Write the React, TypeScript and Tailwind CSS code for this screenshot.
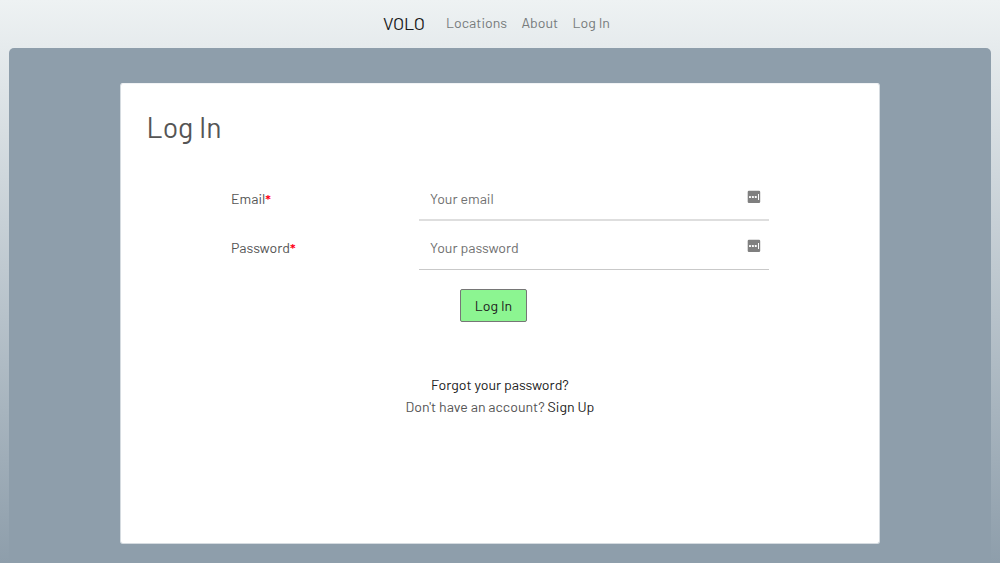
import type { ReactNode } from 'react';

function AutofillIcon({ place }: { place: string }) {
  return (
    <svg className={`absolute right-2 size-[14px] ${place}`} viewBox="0 0 14 14" aria-hidden="true">
      <rect x="0.7" y="0.8" width="12.5" height="12.2" rx="1.2" fill="#7f7f7f" />
      <g fill="#fff">
        <rect x="2" y="6" width="2" height="2" rx="0.4" />
        <rect x="4.9" y="6" width="2" height="2" rx="0.4" />
        <rect x="7.8" y="6" width="2" height="2" rx="0.4" />
        <rect x="11" y="4" width="1" height="6" />
      </g>
    </svg>
  );
}

interface FieldProps {
  label: ReactNode;
  type: string;
  placeholder: string;
  box: string;
  iconPlace: string;
}

function Field({ label, type, placeholder, box, iconPlace }: FieldProps) {
  return (
    <div className="flex items-start">
      <label className="w-[188px] pt-[12px] leading-5">{label}</label>
      <div className="relative w-[350px]">
        <input
          type={type}
          placeholder={placeholder}
          className={`block h-11 w-full bg-transparent px-[11px] text-[#555] outline-none placeholder:text-[#707070] ${box}`}
        />
        <AutofillIcon place={iconPlace} />
      </div>
    </div>
  );
}

function Required() {
  return <span className="font-semibold text-[#ff0018]">*</span>;
}

export default function App() {
  return (
    <div className="flex h-[563px] flex-col overflow-hidden bg-linear-to-b from-[#eef2f3] to-[#8e9eab] font-['Barlow','Roboto',sans-serif] text-[14.15px] text-[#555]">
      <nav className="flex h-12 shrink-0 items-center pb-[1px] pl-[383px] text-[#777b7c]">
        <a className="w-[63px] text-[18px] tracking-[-0.25px] text-[#191919]">VOLO</a>
        <a className="w-[75.5px] pb-[1px]">Locations</a>
        <a className="w-[51px] pb-[1px]">About</a>
        <a className="pb-[1px]">Log In</a>
      </nav>
      <div className="mx-[9px] flex-1 rounded-t-[5px] bg-[#8e9eab] pt-[35px]">
        <main className="mx-auto h-[461px] w-[760px] rounded-[3px] border border-[#d5dbe0] border-t-[#f1f3f5] bg-white">
          <h1 className="pl-[25.5px] pt-[25px] text-[28.4px] leading-9">Log In</h1>
          <form className="mt-[32px] pl-[110px]">
            <Field
              label={<>Email<Required /></>}
              type="email"
              placeholder="Your email"
              box="border-b-2 border-[#dedede]"
              iconPlace="top-[12.5px]"
            />
            <div className="h-[5px]" />
            <Field
              label={<>Password<Required /></>}
              type="password"
              placeholder="Your password"
              box="border-b border-[#c9c9c9] pb-[1px]"
              iconPlace="top-[13px]"
            />
            <button type="button" className="ml-[229px] mt-[19px] block h-[32.5px] w-[67px] rounded-[2px] border border-[#767676] bg-[#8cf591] pt-[1px] text-[#202020]">
              Log In
            </button>
          </form>
          <div className="mt-[52.5px] text-center leading-[21.5px]">
            <p><a className="text-[#222]">Forgot your password?</a></p>
            <p>Don't have an account? <a className="text-[#222]">Sign Up</a></p>
          </div>
        </main>
      </div>
    </div>
  );
}
